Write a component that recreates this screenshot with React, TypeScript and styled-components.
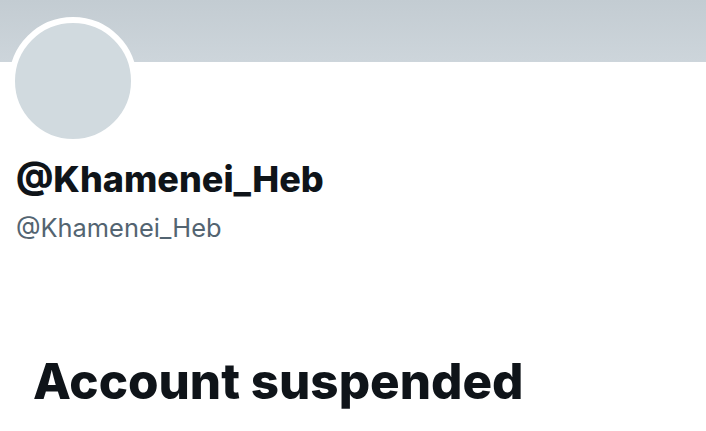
import React from 'react';
import styled, { createGlobalStyle } from 'styled-components';

const GlobalStyle = createGlobalStyle`
    html, body {
        margin: 0;
        padding: 0;
        background: #ffffff;
        font-family: Inter, "Liberation Sans", Arial, sans-serif;
    }
`;

const Page = styled.div`
    width: 706px;
    height: 431px;
    overflow: hidden;
    background: #ffffff;
`;

const Banner = styled.div`
    height: 62px;
    background: linear-gradient(180deg, #c3ccd2 0%, #cdd5db 100%);
`;

const Avatar = styled.div`
    width: 116px;
    height: 116px;
    margin: -45px 0 0 9px;
    border: 6px solid #ffffff;
    border-radius: 50%;
    background: #d1dadf;
    position: relative;
`;

const Info = styled.div`
    padding: 13px 0 0 16px;
    display: flex;
    flex-direction: column;
`;

const Name = styled.div`
    font-size: 36px;
    line-height: 42px;
    font-weight: 800;
    color: #0f1419;
`;

const Handle = styled.div`
    margin-top: 13px;
    font-size: 25.4px;
    line-height: 30px;
    color: #536471;
`;

const Suspended = styled.h1`
    margin: 110px 0 0 33px;
    font-size: 49.3px;
    line-height: 56px;
    font-weight: 800;
    color: #0f1419;
`;

const App = () => {
    return <Page>
        <GlobalStyle />
        <Banner />
        <Avatar />
        <Info>
            <Name>@Khamenei_Heb</Name>
            <Handle>@Khamenei_Heb</Handle>
        </Info>
        <Suspended>Account suspended</Suspended>
    </Page>
};

export default App;
